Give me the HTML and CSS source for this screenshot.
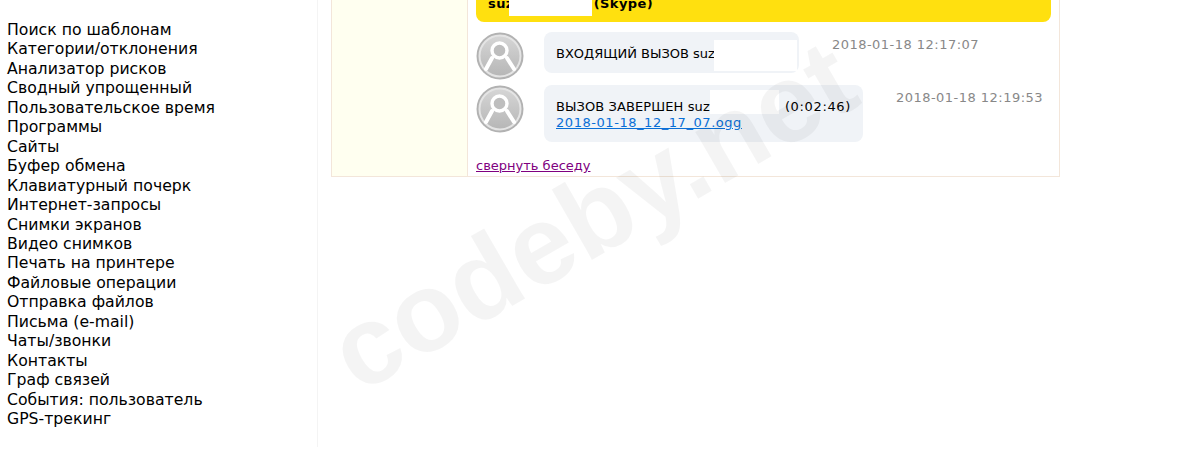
FILE: index.html
```html
<!DOCTYPE html>
<html lang="ru">
<head>
    <meta charset="UTF-8">
    <title>Чаты/звонки</title>
    <link rel="stylesheet" href="styles.css">
</head>
<body>
    <div class="page">
        <ul class="sidebar">
            <li>Поиск по шаблонам</li>
            <li>Категории/отклонения</li>
            <li>Анализатор рисков</li>
            <li>Сводный упрощенный</li>
            <li>Пользовательское время</li>
            <li>Программы</li>
            <li>Сайты</li>
            <li>Буфер обмена</li>
            <li>Клавиатурный почерк</li>
            <li>Интернет-запросы</li>
            <li>Снимки экранов</li>
            <li>Видео снимков</li>
            <li>Печать на принтере</li>
            <li>Файловые операции</li>
            <li>Отправка файлов</li>
            <li>Письма (e-mail)</li>
            <li>Чаты/звонки</li>
            <li>Контакты</li>
            <li>Граф связей</li>
            <li>События: пользователь</li>
            <li>GPS-трекинг</li>
        </ul>
        <div class="main">
            <div class="report">
                <div class="report-side"></div>
                <div class="report-body">
                    <div class="chat-title">
                        <span>suz</span>
                        <span class="title-name"></span>
                        <span>(Skype)</span>
                    </div>
                    <div class="message">
                        <svg class="avatar" viewBox="0 0 48 48"><use href="#avatar"></use></svg>
                        <div class="bubble bubble-in">
                            ВХОДЯЩИЙ ВЫЗОВ suz
                            <span class="hidden-name in-name"></span>
                        </div>
                        <div class="time time-in">2018-01-18 12:17:07</div>
                    </div>
                    <div class="message">
                        <svg class="avatar" viewBox="0 0 48 48"><use href="#avatar"></use></svg>
                        <div class="bubble bubble-end">
                            <div class="call-line">
                                <span>ВЫЗОВ ЗАВЕРШЕН suz</span>
                                <span class="hidden-name end-name"></span>
                                <span class="duration">(0:02:46)</span>
                            </div>
                            <a class="record" href="#">2018-01-18_12_17_07.ogg</a>
                        </div>
                        <div class="time time-end">2018-01-18 12:19:53</div>
                    </div>
                    <a class="collapse" href="#">свернуть беседу</a>
                </div>
            </div>
        </div>
    </div>
    <div class="watermark">codeby.net</div>

    <svg class="defs" width="0" height="0">
        <defs>
            <linearGradient id="disc" x1="0" y1="0" x2="0" y2="1">
                <stop offset="0" stop-color="#d6d6d6"/>
                <stop offset="1" stop-color="#b6b6b6"/>
            </linearGradient>
            <g id="avatar">
                <circle cx="24" cy="24" r="23.5" fill="#b2b2b2"/>
                <circle cx="24" cy="24" r="20.5" fill="url(#disc)" stroke="#e4e4e4" stroke-width="2"/>
                <path d="M16 26 L10 37 M31 26 L38 37" stroke="#fff" stroke-width="4" stroke-linecap="round" fill="none"/>
                <circle cx="23.5" cy="18.5" r="7.5" fill="#bebebe" stroke="#fff" stroke-width="3.4"/>
            </g>
        </defs>
    </svg>
</body>
</html>
```

FILE: styles.css
```css
html, body {
    margin: 0;
    padding: 0;
    height: 450px;
    overflow: hidden;
    background-color: #ffffff;
}
body {
    position: relative;
    color: #000;
    font-family: "DejaVu Sans", sans-serif;
    font-size: 13px;
}
.page {
    display: flex;
    align-items: flex-start;
}
.sidebar {
    list-style: none;
    box-sizing: border-box;
    flex: 0 0 318px;
    height: 447px;
    margin: 0;
    padding: 20px 0 0 7px;
    border-right: 1px solid #f4f4f4;
    font-size: 15.7px;
    line-height: 19.45px;
}
.main {
    flex: 1;
    padding-left: 13px;
}
.report {
    display: flex;
    width: 729px;
    height: 177px;
    box-sizing: border-box;
    border: 1px solid #f3e6da;
    border-top: none;
}
.report-side {
    flex: 0 0 135px;
    background-color: #fffff0;
    border-right: 1px solid #f3e6da;
}
.report-body {
    flex: 1;
    padding: 0 8px;
}
.chat-title {
    display: flex;
    align-items: flex-start;
    height: 22px;
    box-sizing: border-box;
    padding-left: 12px;
    margin-bottom: 10px;
    background-color: #ffe00f;
    border-radius: 0 0 8px 8px;
    font-weight: bold;
    line-height: 8px;
    letter-spacing: 0.4px;
}
.title-name {
    width: 83px;
    height: 16px;
    margin: 0 2px 0 -5px;
    background-color: #ffffff;
}
.message {
    position: relative;
    display: flex;
    align-items: flex-start;
    margin-bottom: 5px;
}
.avatar {
    flex: 0 0 48px;
    width: 48px;
    height: 48px;
}
.bubble {
    position: relative;
    box-sizing: border-box;
    margin-left: 20px;
    padding-left: 12px;
    background-color: #f0f3f7;
    border-radius: 8px;
}
.bubble-in {
    width: 255px;
    height: 41px;
    line-height: 43px;
}
.bubble-end {
    width: 319px;
    height: 57px;
    padding-top: 14px;
    line-height: 16px;
    letter-spacing: 0.1px;
}
.call-line {
    display: flex;
}
.duration {
    position: absolute;
    right: 12px;
    top: 14px;
    letter-spacing: 0.65px;
}
.hidden-name {
    position: absolute;
    background-color: #ffffff;
}
.in-name {
    left: 170px;
    top: 8px;
    width: 83px;
    height: 31px;
}
.end-name {
    left: 166px;
    top: 5px;
    width: 69px;
    height: 24px;
}
.time {
    color: #888;
    letter-spacing: 0.47px;
    white-space: nowrap;
}
.time-in,
.time-end {
    margin: 5px 0 0 33px;
}
.record {
    color: #0a6fd6;
    letter-spacing: 0.55px;
}
.collapse {
    display: block;
    margin-top: 16px;
    color: #800080;
}
.watermark {
    position: absolute;
    left: 368px;
    top: 298px;
    color: rgba(0, 0, 0, 0.045);
    font-family: "Liberation Sans", sans-serif;
    font-size: 112px;
    font-weight: bold;
    line-height: 1;
    white-space: nowrap;
    transform: rotate(-30deg);
    transform-origin: left bottom;
    pointer-events: none;
}
.defs {
    position: absolute;
}
```
